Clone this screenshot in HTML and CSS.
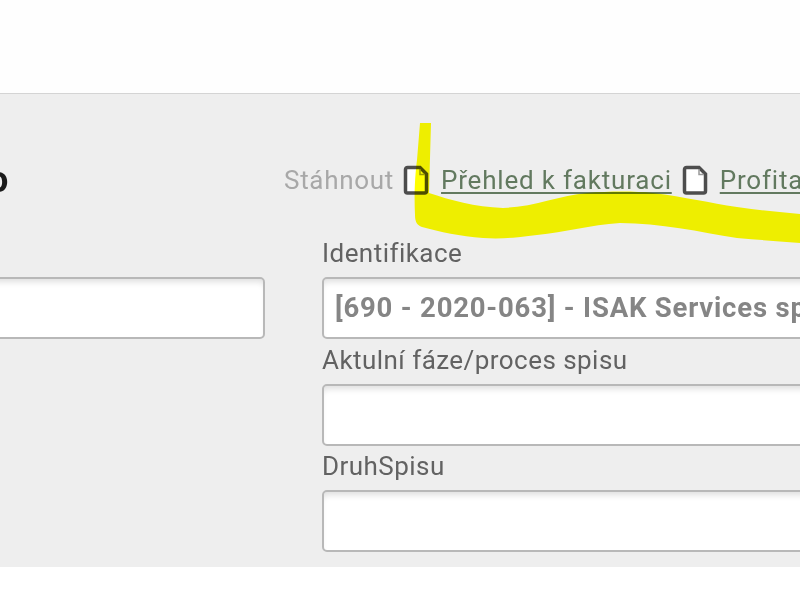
FILE: index.html
```
<!DOCTYPE html>
<html lang="cs">
<head>
<meta charset="utf-8">
<title>Spis</title>
<link rel="stylesheet" href="styles.css">
</head>
<body>
<div class="page">
  <div class="top"></div>
  <main class="panel">
    <div class="head">
      <div class="title-cell"><h1 class="title">o</h1></div>
      <div class="downloads">
        <span class="dl-label">Stáhnout</span>
        <svg class="doc" viewBox="0 0 26 30"><path d="M2.500 4.500a2 2 0 0 1 2-2h12.500l6.500 6.500v17a2 2 0 0 1-2 2h-17a2 2 0 0 1-2-2z" fill="#fff" stroke="#4d4d4d" stroke-width="3.500"/><path d="M17 4v5.500h5" fill="none" stroke="#999" stroke-width="1.500"/></svg>
        <a class="dl-link" href="#">Přehled k fakturaci</a>
        <svg class="doc" viewBox="0 0 26 30"><path d="M2.500 4.500a2 2 0 0 1 2-2h12.500l6.500 6.500v17a2 2 0 0 1-2 2h-17a2 2 0 0 1-2-2z" fill="#fff" stroke="#4d4d4d" stroke-width="3.500"/><path d="M17 4v5.500h5" fill="none" stroke="#999" stroke-width="1.500"/></svg>
        <a class="dl-link" href="#">Profitabilita</a>
      </div>
    </div>
    <div class="form">
      <div class="col-left">
        <div class="field"><div class="label">&nbsp;</div><div class="input"></div></div>
      </div>
      <div class="col-right">
        <div class="field"><div class="label">Identifikace</div><div class="input value">[690 - 2020-063] - ISAK Services spol. s r.o.</div></div>
        <div class="field"><div class="label">Aktulní fáze/proces spisu</div><div class="input"></div></div>
        <div class="field"><div class="label">DruhSpisu</div><div class="input"></div></div>
      </div>
    </div>
  </main>
  <svg class="marker" viewBox="0 0 800 600"><path d="M420 123H431L429 193C450 200 475 207 503 208C535 207 560 195 587 193C610 191 635 191 653 193C685 197 710 203 737 207C757 210 778 212 800 214V243C778 241 757 240 737 238C700 232 660 223 620 223C590 225 565 232 537 235C515 238 500 239 483 238C460 236 440 232 422 227C417 225 415 222 415 215C414 195 415 175 417 160z" fill="#ffff00"/></svg>
</div>
</body>
</html>
```
FILE: styles.css
```
html, body {
  margin: 0;
  padding: 0;
  background: #fff;
}
.page {
  position: relative;
  width: 800px;
  height: 600px;
  overflow: hidden;
  font-family: Roboto, "Liberation Sans", sans-serif;
  filter: blur(0.6px);
}
.top {
  height: 93px;
  background: #fefefe;
}
.panel {
  height: 473px;
  background: #eeeeee;
  border-top: 1px solid #d4d4d4;
  overflow: hidden;
}
.head {
  display: flex;
  align-items: center;
  height: 60px;
  padding-top: 56px;
}
.title-cell {
  flex: none;
  width: 284px;
}
.title {
  margin: 0 0 0 -12px;
  font-size: 36px;
  line-height: 40px;
  font-weight: 700;
  color: #1a1a1a;
}
.downloads {
  display: flex;
  align-items: center;
  flex: none;
  white-space: nowrap;
  font-size: 26px;
  letter-spacing: 0.8px;
}
.dl-label {
  color: #a8a8a8;
  margin-right: 9px;
  letter-spacing: 0.7px;
}
.doc {
  flex: none;
  width: 26px;
  height: 30px;
}
.dl-link {
  color: #62795f;
  text-decoration: underline;
  text-underline-offset: 3px;
  margin: 0 10px 0 12px;
}
.form {
  display: flex;
  gap: 57px;
  padding-top: 22px;
}
.col-left {
  flex: none;
  width: 265px;
}
.col-right {
  flex: none;
  width: 560px;
}
.field {
  height: 106.500px;
}
.label {
  height: 45px;
  line-height: 42px;
  font-size: 26px;
  letter-spacing: 0.45px;
  color: #626262;
  white-space: nowrap;
}
.input {
  box-sizing: border-box;
  height: 62px;
  background: #fff;
  border: 2px solid #b8b8b8;
  border-radius: 5px;
  box-shadow: inset 0 6px 6px -3px rgba(0, 0, 0, 0.13);
  padding: 0 11px;
  line-height: 58px;
  white-space: nowrap;
  overflow: hidden;
}
.col-left .input {
  margin-left: -10px;
}
.value {
  font-size: 27.500px;
  font-weight: 700;
  letter-spacing: 0.8px;
  color: #858585;
}
.marker {
  position: absolute;
  inset: 0;
  width: 800px;
  height: 600px;
  mix-blend-mode: multiply;
}
```
